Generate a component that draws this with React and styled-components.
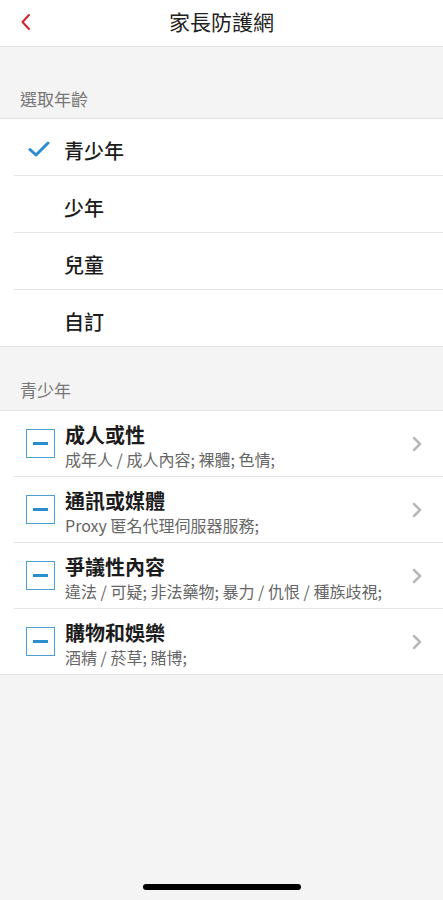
import styled, { createGlobalStyle } from "styled-components";

const Global = createGlobalStyle`
  html, body {
    margin: 0;
    padding: 0;
    background: #f4f4f4;
    font-family: "Noto Sans CJK TC", "Noto Sans", sans-serif;
  }
`

const Page = styled.div`
  width: 443px;
  height: 900px;
  background: #f4f4f4;
  display: flex;
  flex-direction: column;
  position: relative;
  overflow: hidden;
`
const Header = styled.header`
  height: 46px;
  background: #fff;
  border-bottom: 1px solid #e2e2e2;
  display: flex;
  align-items: center;
  justify-content: center;
  position: relative;
  flex-shrink: 0;
`
const Back = styled.button`
  position: absolute;
  left: 12px;
  top: 8px;
  width: 28px;
  height: 28px;
  border: 0;
  background: none;
  padding: 0;
  display: flex;
  align-items: center;
  justify-content: center;
`
const Title = styled.h1`
  margin: 0;
  font-size: 21px;
  font-weight: 400;
  color: #222;
  line-height: 1;
  margin-top: -4px;
`
const SectionLabel = styled.div`
  padding: ${p => p.$top}px 20px 0;
  height: ${p => p.$h}px;
  box-sizing: border-box;
  font-size: 17px;
  color: #777;
  line-height: 20px;
`
const List = styled.div`
  background: #fff;
  border-top: 1px solid #e4e4e4;
  border-bottom: 1px solid #e0e0e0;
`
const AgeRow = styled.div`
  height: 56px;
  margin-left: 14px;
  display: flex;
  align-items: center;
  border-bottom: 1px solid #e6e6e6;
  &:last-child {
    border-bottom: none;
  }
`
const CheckSlot = styled.div`
  width: 50px;
  display: flex;
  align-items: center;
  padding-left: 14px;
  box-sizing: border-box;
  margin-top: 4px;
`
const AgeText = styled.span`
  font-size: 20px;
  font-weight: 500;
  color: #1c1c1c;
  margin-top: 6px;
`
const CatRow = styled.div`
  height: 65px;
  margin-left: 14px;
  display: flex;
  align-items: center;
  border-bottom: 1px solid #e6e6e6;
  &:last-child {
    border-bottom: none;
  }
`
const Box = styled.div`
  width: 27px;
  height: 27px;
  border: 1.5px solid #4aa0d8;
  margin-left: 12px;
  margin-right: 10px;
  display: flex;
  align-items: center;
  justify-content: center;
  flex-shrink: 0;
  &::after {
    content: "";
    width: 15px;
    height: 3px;
    background: #2a8dd0;
  }
`
const CatText = styled.div`
  flex: 1;
  display: flex;
  flex-direction: column;
  margin-top: 4px;
`
const CatTitle = styled.div`
  font-size: 20px;
  font-weight: 700;
  color: #1c1c1c;
  line-height: 26px;
`
const CatSub = styled.div`
  font-size: 16px;
  color: #666;
  line-height: 22px;
  white-space: nowrap;
`
const Chevron = styled.div`
  width: 32px;
  display: flex;
  flex-shrink: 0;
`
const HomeBar = styled.div`
  position: absolute;
  bottom: 10px;
  left: 143px;
  width: 158px;
  height: 6px;
  border-radius: 3px;
  background: #000;
`

const ages = ["青少年", "少年", "兒童", "自訂"]
const cats = [
  { title: "成人或性", sub: "成年人 / 成人內容; 裸體; 色情;" },
  { title: "通訊或媒體", sub: "Proxy 匿名代理伺服器服務;" },
  { title: "爭議性內容", sub: "違法 / 可疑; 非法藥物; 暴力 / 仇恨 / 種族歧視;" },
  { title: "購物和娛樂", sub: "酒精 / 菸草; 賭博;" },
]

export default function App() {
  return (
    <Page>
      <Global />
      <Header>
        <Back>
          <svg width="14" height="20" viewBox="0 0 14 20">
            <path d="M10 3 L3.5 10 L10 17" fill="none" stroke="#d0252e" strokeWidth="2" strokeLinecap="round" strokeLinejoin="round" />
          </svg>
        </Back>
        <Title>家長防護網</Title>
      </Header>
      <SectionLabel $top={42} $h={71}>選取年齡</SectionLabel>
      <List>
        {ages.map((a, i) => (
          <AgeRow key={a}>
            <CheckSlot>
              {i === 0 && (
                <svg width="22" height="16" viewBox="0 0 22 16">
                  <path d="M2 8.5 L8 14 L20 2" fill="none" stroke="#2a8dd0" strokeWidth="3" strokeLinecap="round" strokeLinejoin="round" />
                </svg>
              )}
            </CheckSlot>
            <AgeText>{a}</AgeText>
          </AgeRow>
        ))}
      </List>
      <SectionLabel $top={33} $h={63}>青少年</SectionLabel>
      <List>
        {cats.map(c => (
          <CatRow key={c.title}>
            <Box />
            <CatText>
              <CatTitle>{c.title}</CatTitle>
              <CatSub>{c.sub}</CatSub>
            </CatText>
            <Chevron>
              <svg width="12" height="18" viewBox="0 0 12 18">
                <path d="M3 3 L9 9 L3 15" fill="none" stroke="#b8b8b8" strokeWidth="2.5" strokeLinecap="round" strokeLinejoin="round" />
              </svg>
            </Chevron>
          </CatRow>
        ))}
      </List>
      <HomeBar />
    </Page>
  )
}
